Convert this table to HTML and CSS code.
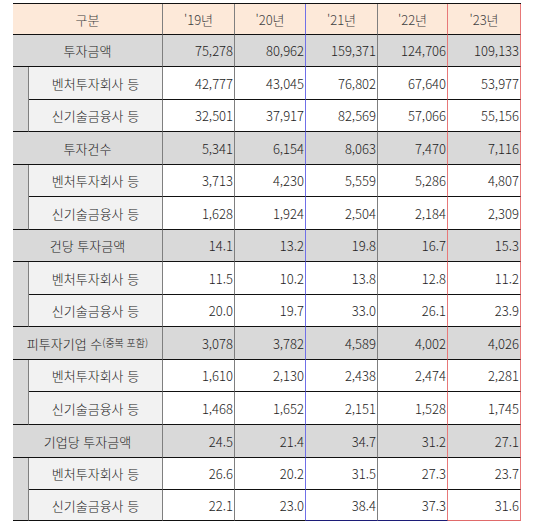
FILE: index.html
```html
<!DOCTYPE html>
<html lang="ko">
<head>
<meta charset="utf-8">
<link rel="stylesheet" href="styles.css">
</head>
<body>
<div class="tbl">
  <div class="c h lab">구분</div>
  <div class="c h y19">'19년</div>
  <div class="c h y20">'20년</div>
  <div class="c h y21">'21년</div>
  <div class="c h y22">'22년</div>
  <div class="c h y23">'23년</div>

  <div class="c g lab">투자금액</div>
  <div class="c gn y19">75,278</div><div class="c gn y20">80,962</div><div class="c gn y21">159,371</div><div class="c gn y22">124,706</div><div class="c gn y23">109,133</div>
  <div class="c ind"></div>
  <div class="c sl">벤처투자회사 등</div>
  <div class="c n y19">42,777</div><div class="c n y20">43,045</div><div class="c n y21">76,802</div><div class="c n y22">67,640</div><div class="c n y23">53,977</div>
  <div class="c sl">신기술금융사 등</div>
  <div class="c n y19">32,501</div><div class="c n y20">37,917</div><div class="c n y21">82,569</div><div class="c n y22">57,066</div><div class="c n y23">55,156</div>

  <div class="c g lab">투자건수</div>
  <div class="c gn y19">5,341</div><div class="c gn y20">6,154</div><div class="c gn y21">8,063</div><div class="c gn y22">7,470</div><div class="c gn y23">7,116</div>
  <div class="c ind"></div>
  <div class="c sl">벤처투자회사 등</div>
  <div class="c n y19">3,713</div><div class="c n y20">4,230</div><div class="c n y21">5,559</div><div class="c n y22">5,286</div><div class="c n y23">4,807</div>
  <div class="c sl">신기술금융사 등</div>
  <div class="c n y19">1,628</div><div class="c n y20">1,924</div><div class="c n y21">2,504</div><div class="c n y22">2,184</div><div class="c n y23">2,309</div>

  <div class="c g lab">건당 투자금액</div>
  <div class="c gn y19">14.1</div><div class="c gn y20">13.2</div><div class="c gn y21">19.8</div><div class="c gn y22">16.7</div><div class="c gn y23">15.3</div>
  <div class="c ind"></div>
  <div class="c sl">벤처투자회사 등</div>
  <div class="c n y19">11.5</div><div class="c n y20">10.2</div><div class="c n y21">13.8</div><div class="c n y22">12.8</div><div class="c n y23">11.2</div>
  <div class="c sl">신기술금융사 등</div>
  <div class="c n y19">20.0</div><div class="c n y20">19.7</div><div class="c n y21">33.0</div><div class="c n y22">26.1</div><div class="c n y23">23.9</div>

  <div class="c g lab">피투자기업 수<span class="sm">(중복 포함)</span></div>
  <div class="c gn y19">3,078</div><div class="c gn y20">3,782</div><div class="c gn y21">4,589</div><div class="c gn y22">4,002</div><div class="c gn y23">4,026</div>
  <div class="c ind"></div>
  <div class="c sl">벤처투자회사 등</div>
  <div class="c n y19">1,610</div><div class="c n y20">2,130</div><div class="c n y21">2,438</div><div class="c n y22">2,474</div><div class="c n y23">2,281</div>
  <div class="c sl">신기술금융사 등</div>
  <div class="c n y19">1,468</div><div class="c n y20">1,652</div><div class="c n y21">2,151</div><div class="c n y22">1,528</div><div class="c n y23">1,745</div>

  <div class="c g lab">기업당 투자금액</div>
  <div class="c gn y19">24.5</div><div class="c gn y20">21.4</div><div class="c gn y21">34.7</div><div class="c gn y22">31.2</div><div class="c gn y23">27.1</div>
  <div class="c ind"></div>
  <div class="c sl">벤처투자회사 등</div>
  <div class="c n y19">26.6</div><div class="c n y20">20.2</div><div class="c n y21">31.5</div><div class="c n y22">27.3</div><div class="c n y23">23.7</div>
  <div class="c sl last">신기술금융사 등</div>
  <div class="c n y19 last">22.1</div><div class="c n y20 last">23.0</div><div class="c n y21 last navy">38.4</div><div class="c n y22 last navy">37.3</div><div class="c n y23 last redb">31.6</div>
</div>
</body>
</html>
```

FILE: styles.css
```css
html, body {
  margin: 0;
  padding: 0;
  background: #ffffff;
}
body {
  padding: 3px 0 0 13px;
  font-family: "Noto Sans CJK KR", "Noto Sans", sans-serif;
  font-size: 13px;
  font-weight: 300;
  color: #222222;
}
.tbl {
  display: grid;
  width: 508px;
  grid-template-columns: 16px 134px 72px 71px 72px 70px 73px;
  grid-template-rows: 31px 32px 33px 32px 33px 32px 33px 32px 33px 32px 33px 32px 33px 33px 32px 31px;
  border-top: 1px solid #111;
}
.c {
  box-sizing: border-box;
  border-bottom: 1px solid #111;
  border-right: 1px solid #7f7f7f;
  display: flex;
  align-items: center;
  white-space: nowrap;
  line-height: 1;
}
.h {
  background: #fde9d9;
  justify-content: center;
  color: #404040;
}
.lab {
  grid-column: span 2;
  justify-content: center;
}
.g {
  background: #d9d9d9;
}
.gn {
  background: #d9d9d9;
  justify-content: flex-end;
  padding-right: 1px;
}
.n {
  background: #ffffff;
  justify-content: flex-end;
  padding-right: 1px;
}
.ind {
  grid-row: span 2;
  background: #d9d9d9;
}
.sl {
  background: #f2f2f2;
  justify-content: center;
}
.y20 { border-right-color: #7070e8; }
.y22 { border-right-color: #e87878; }
.y23 { border-right-color: #e87878; }
.sm { font-size: 10px; }
.navy { border-bottom-color: #1c1c78; }
.redb { border-bottom-color: #e06a6a; }
```
